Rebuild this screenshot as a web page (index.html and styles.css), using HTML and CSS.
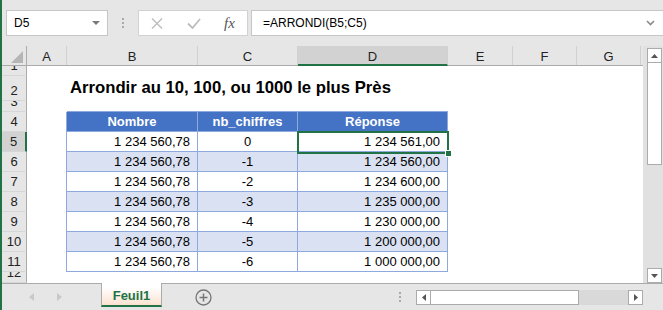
FILE: index.html
```html
<!DOCTYPE html>
<html lang="fr">
<head>
  <meta charset="UTF-8">
  <title>ARRONDI</title>
  <link rel="stylesheet" href="styles.css">
</head>
<body>
  <div class="window">
    <div class="formula-bar">
      <div class="name-box">
        <span>D5</span>
        <svg width="8" height="4" viewBox="0 0 8 4"><path d="M0 0h8L4 4z" fill="#7a7a7a"/></svg>
      </div>
      <div class="grip"><i></i><i></i><i></i></div>
      <div class="fx-buttons">
        <svg class="icon-cancel" width="12" height="11" viewBox="0 0 12 11"><path d="M1 0.5l10 10M11 0.5l-10 10" stroke="#bdbdbd" stroke-width="1.4" fill="none"/></svg>
        <svg class="icon-enter" width="14" height="11" viewBox="0 0 14 11"><path d="M1 5.5l4.5 4.5 7.5-9" stroke="#bdbdbd" stroke-width="1.8" fill="none"/></svg>
        <span class="fx">fx</span>
      </div>
      <div class="formula-input">
        <span>=ARRONDI(B5;C5)</span>
        <svg width="9" height="6" viewBox="0 0 9 6"><path d="M1 1l3.5 3.5L8 1" stroke="#8a8a8a" stroke-width="1.6" fill="none"/></svg>
      </div>
    </div>

    <div class="sheet">
      <div class="grid">
        <div class="col-headers">
          <div class="corner"><svg width="12" height="12" viewBox="0 0 12 12"><path d="M12 0v12H0z" fill="#b5b5b5"/></svg></div>
          <div class="ch">A</div>
          <div class="ch">B</div>
          <div class="ch">C</div>
          <div class="ch active">D</div>
          <div class="ch">E</div>
          <div class="ch">F</div>
          <div class="ch">G</div>
        </div>

        <div class="row h-10"><div class="rh">1</div></div>
        <div class="row h-25">
          <div class="rh">2</div><div></div>
          <div class="title">Arrondir au 10, 100, ou 1000 le plus Près</div>
        </div>
        <div class="row h-11"><div class="rh">3</div></div>

        <div class="row">
          <div class="rh">4</div><div></div>
          <div class="th first">Nombre</div><div class="th">nb_chiffres</div><div class="th">Réponse</div>
        </div>
        <div class="row">
          <div class="rh active">5</div><div></div>
          <div class="td first num">1&nbsp;234&nbsp;560,78</div><div class="td mid">0</div>
          <div class="td num selected">1&nbsp;234&nbsp;561,00<span class="selection"><span class="handle"></span></span></div>
        </div>
        <div class="row band">
          <div class="rh">6</div><div></div>
          <div class="td first num">1&nbsp;234&nbsp;560,78</div><div class="td mid">-1</div><div class="td num">1&nbsp;234&nbsp;560,00</div>
        </div>
        <div class="row">
          <div class="rh">7</div><div></div>
          <div class="td first num">1&nbsp;234&nbsp;560,78</div><div class="td mid">-2</div><div class="td num">1&nbsp;234&nbsp;600,00</div>
        </div>
        <div class="row band">
          <div class="rh">8</div><div></div>
          <div class="td first num">1&nbsp;234&nbsp;560,78</div><div class="td mid">-3</div><div class="td num">1&nbsp;235&nbsp;000,00</div>
        </div>
        <div class="row">
          <div class="rh">9</div><div></div>
          <div class="td first num">1&nbsp;234&nbsp;560,78</div><div class="td mid">-4</div><div class="td num">1&nbsp;230&nbsp;000,00</div>
        </div>
        <div class="row band">
          <div class="rh">10</div><div></div>
          <div class="td first num">1&nbsp;234&nbsp;560,78</div><div class="td mid">-5</div><div class="td num">1&nbsp;200&nbsp;000,00</div>
        </div>
        <div class="row">
          <div class="rh">11</div><div></div>
          <div class="td first num">1&nbsp;234&nbsp;560,78</div><div class="td mid">-6</div><div class="td num">1&nbsp;000&nbsp;000,00</div>
        </div>
        <div class="row h-rest"><div class="rh">12</div></div>
      </div>

      <div class="vscroll">
        <div class="sb-btn"><svg width="7" height="4" viewBox="0 0 7 4"><path d="M0 4h7L3.5 0z" fill="#555"/></svg></div>
        <div class="sb-thumb"></div>
        <div class="sb-track"></div>
        <div class="sb-btn"><svg width="7" height="4" viewBox="0 0 7 4"><path d="M0 0h7L3.5 4z" fill="#555"/></svg></div>
      </div>
    </div>

    <div class="tab-bar">
      <div class="tab-nav">
        <svg width="5" height="8" viewBox="0 0 5 8"><path d="M5 0v8L0 4z" fill="#c8c8c8"/></svg>
        <svg width="5" height="8" viewBox="0 0 5 8"><path d="M0 0v8l5-4z" fill="#c8c8c8"/></svg>
      </div>
      <div class="sheet-tab">Feuil1</div>
      <div class="add-sheet">
        <svg width="17" height="17" viewBox="0 0 17 17"><circle cx="8.5" cy="8.5" r="7.5" fill="none" stroke="#767676" stroke-width="1.3"/><path d="M8.5 4.5v8M4.5 8.5h8" stroke="#767676" stroke-width="1.5"/></svg>
      </div>
      <div class="spacer"></div>
      <div class="grip"><i></i><i></i><i></i></div>
      <div class="hscroll">
        <div class="sb-btn"><svg width="4" height="7" viewBox="0 0 4 7"><path d="M4 0v7L0 3.5z" fill="#555"/></svg></div>
        <div class="sb-thumb"></div>
        <div class="sb-track"></div>
        <div class="sb-btn"><svg width="4" height="7" viewBox="0 0 4 7"><path d="M0 0v7l4-3.5z" fill="#555"/></svg></div>
      </div>
    </div>
  </div>
</body>
</html>
```

FILE: styles.css
```css
* {
  box-sizing: border-box;
}

body {
  margin: 0;
  font-family: "Liberation Sans", Arial, sans-serif;
  font-size: 13px;
  color: #000;
}

.window {
  width: 663px;
  height: 310px;
  border-left: 2px solid #217346;
  background-color: #e6e6e6;
  display: flex;
  flex-direction: column;
  overflow: hidden;
}

/* formula bar */
.formula-bar {
  height: 46px;
  flex-shrink: 0;
  display: flex;
  align-items: flex-start;
  padding: 10px 0 0 4px;
  font-size: 12px;
}

.name-box {
  width: 102px;
  height: 26px;
  background-color: #fff;
  border: 1px solid #c6c6c6;
  display: flex;
  align-items: center;
  justify-content: space-between;
  padding: 0 7px;
}

.grip {
  width: 30px;
  display: flex;
  flex-direction: column;
  align-items: center;
  gap: 2px;
  padding-top: 8px;
}

.grip i {
  width: 2px;
  height: 2px;
  background-color: #aaa;
}

.fx-buttons {
  width: 110px;
  height: 26px;
  background-color: #fff;
  border: 1px solid #d2d2d2;
  display: flex;
  align-items: center;
  padding-left: 12px;
}

.icon-enter {
  margin-left: 24px;
}

.fx {
  margin-left: 23px;
  font-family: "Liberation Serif", serif;
  font-style: italic;
  font-size: 15px;
  color: #555;
}

.formula-input {
  flex: 1;
  height: 26px;
  margin-left: 3px;
  background-color: #fff;
  border: 1px solid #c6c6c6;
  border-right: none;
  display: flex;
  align-items: center;
  justify-content: space-between;
  padding: 0 8px 0 11px;
}

/* sheet */
.sheet {
  height: 237px;
  flex-shrink: 0;
  display: flex;
}

.grid {
  width: 641px;
  background-color: #fff;
  overflow: hidden;
}

.col-headers {
  display: flex;
  height: 20px;
  background-color: #e6e6e6;
  border-bottom: 1px solid #ababab;
}

.corner {
  width: 25px;
  border-right: 1px solid #ababab;
  display: flex;
  align-items: flex-end;
  justify-content: flex-end;
  padding: 0 3px 2px 0;
}

.ch {
  border-right: 1px solid #d0d0d0;
  display: flex;
  align-items: center;
  justify-content: center;
  padding-top: 2px;
  color: #222;
}

.ch:nth-child(2) { width: 40px; }
.ch:nth-child(3) { width: 131px; }
.ch:nth-child(4) { width: 100px; }
.ch:nth-child(5) { width: 150px; }
.ch:nth-child(6) { width: 65px; }
.ch:nth-child(7) { width: 64px; }
.ch:nth-child(8) { width: 64px; }

.ch.active {
  background-color: #d2d2d2;
  border-bottom: 2px solid #217346;
  margin-bottom: -1px;
}

.row {
  display: grid;
  grid-template-columns: 25px 40px 131px 100px 150px;
  height: 20px;
}

.row.h-10 { height: 10px; }
.row.h-25 { height: 25px; }
.row.h-11 { height: 11px; }
.row.h-rest { height: 11px; }

.rh {
  background-color: #e6e6e6;
  border-right: 1px solid #ababab;
  border-bottom: 1px solid #d6d6d6;
  display: flex;
  align-items: flex-end;
  justify-content: center;
  padding-bottom: 2px;
  overflow: hidden;
  color: #222;
  line-height: 15px;
}

.rh.active {
  background-color: #d2d2d2;
  border-right: 2px solid #217346;
}

.title {
  white-space: nowrap;
  font-weight: bold;
  font-size: 16.7px;
  padding: 0 0 3px 3px;
  display: flex;
  align-items: flex-end;
}

.th,
.td {
  display: flex;
  align-items: center;
  border-right: 1px solid #8ea9db;
  border-bottom: 1px solid #8ea9db;
  white-space: nowrap;
}

.th {
  justify-content: center;
  background-color: #4472c4;
  color: #fff;
  font-weight: bold;
  box-shadow: 0 -1px 0 #8ea9db;
}

.td.first {
  box-shadow: -1px 0 0 #8ea9db;
}

.th.first {
  box-shadow: -1px 0 0 #8ea9db, 0 -1px 0 #8ea9db;
}

.band .td {
  background-color: #d9e1f2;
}

.td.num {
  justify-content: flex-end;
  padding-right: 7px;
}

.td.mid {
  justify-content: center;
}

.td.selected {
  position: relative;
}

.selection {
  position: absolute;
  top: -1px;
  left: -1px;
  width: 152px;
  height: 23px;
  border: 2px solid #217346;
}

.handle {
  position: absolute;
  right: -5px;
  bottom: -5px;
  width: 7px;
  height: 7px;
  background-color: #217346;
  border: 1px solid #fff;
}

/* scroll bars */
.vscroll {
  width: 20px;
  background-color: #e1e1e1;
  display: flex;
  flex-direction: column;
  padding: 2px 1px 0 4px;
}

.sb-btn {
  width: 15px;
  height: 15px;
  flex-shrink: 0;
  background-color: #fff;
  border: 1px solid #ababab;
  display: flex;
  align-items: center;
  justify-content: center;
}

.sb-thumb {
  background-color: #fff;
  border: 1px solid #ababab;
}

.vscroll .sb-thumb {
  height: 103px;
  margin-top: -1px;
}

.vscroll .sb-track {
  flex: 1;
}

/* tabs */
.tab-bar {
  flex: 1;
  border-top: 1px solid #ababab;
  display: flex;
  align-items: flex-start;
}

.tab-nav {
  width: 99px;
  height: 26px;
  display: flex;
  align-items: center;
  gap: 23px;
  padding-left: 27px;
}

.sheet-tab {
  width: 61px;
  height: 24px;
  margin-top: -1px;
  border-left: 1px solid #ababab;
  border-right: 1px solid #ababab;
  border-bottom: 2px solid #217346;
  background: linear-gradient(#ffffff 20%, #fbe2d1);
  color: #217346;
  font-weight: bold;
  display: flex;
  align-items: center;
  justify-content: center;
  padding-top: 2px;
}

.add-sheet {
  margin: 5px 0 0 33px;
  display: flex;
}

.spacer {
  flex: 1;
}

.tab-bar .grip {
  width: 6px;
  padding-top: 8px;
}

.hscroll {
  width: 227px;
  height: 15px;
  margin: 6px 20px 0 13px;
  display: flex;
  background-color: #d9d9d9;
}

.hscroll .sb-thumb {
  width: 149px;
  margin-left: -1px;
}

.hscroll .sb-track {
  flex: 1;
}
```
